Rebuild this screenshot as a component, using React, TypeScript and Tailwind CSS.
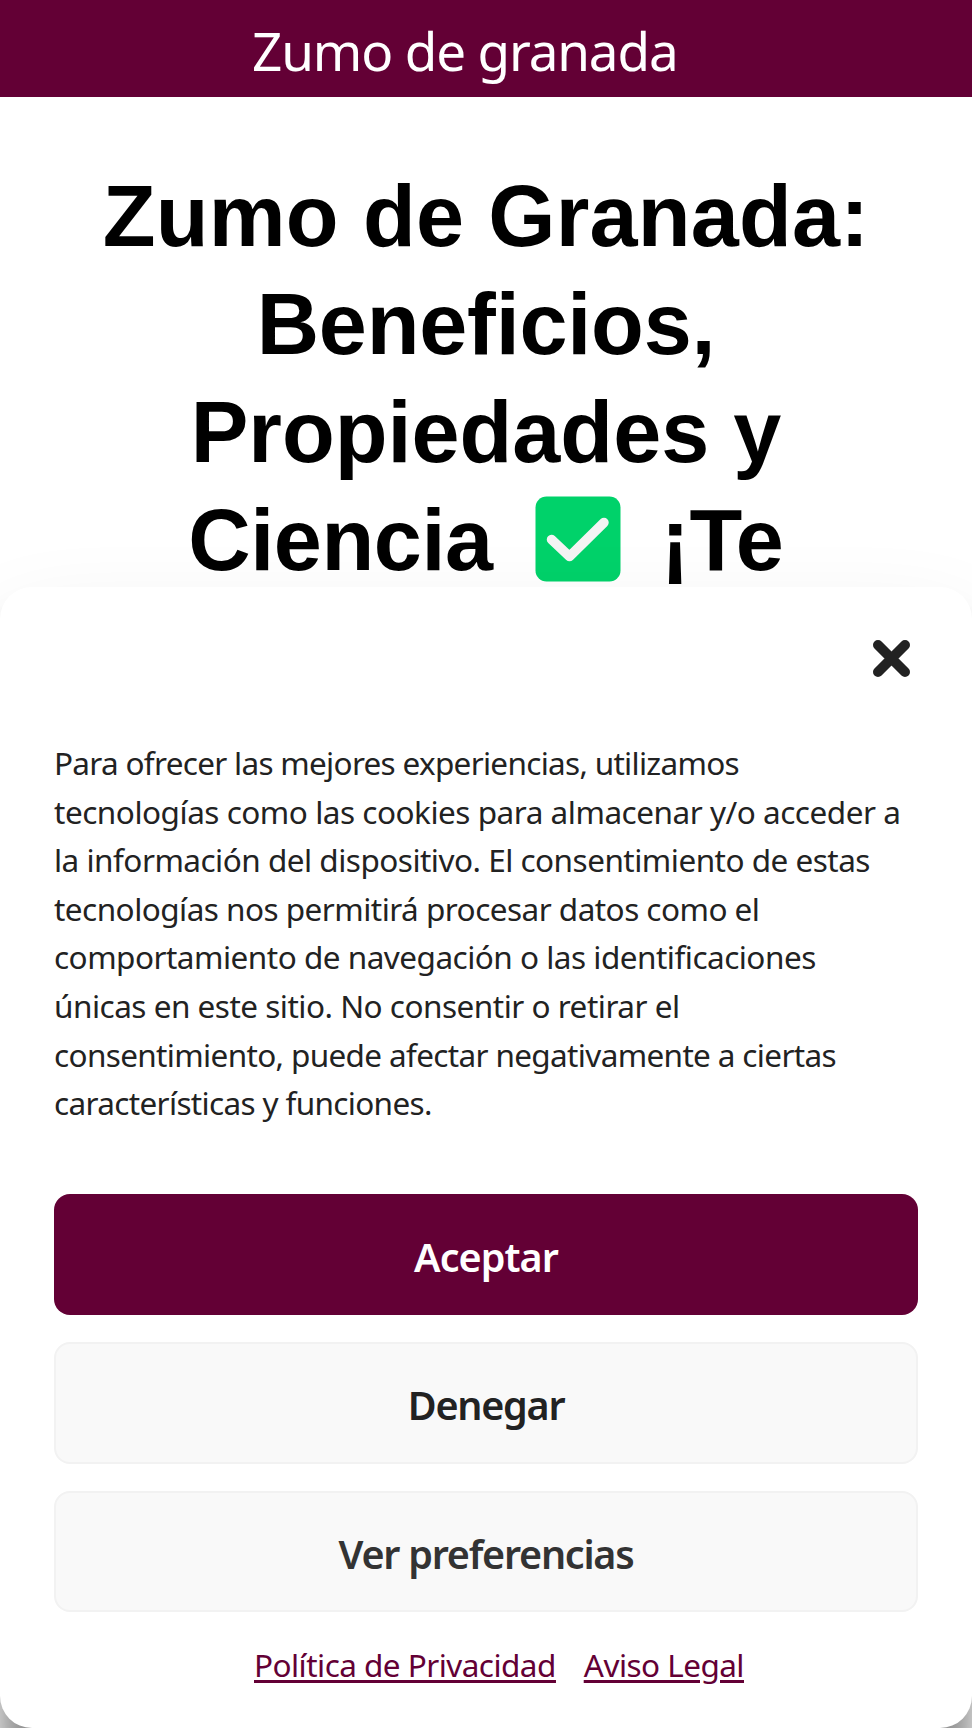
import React from 'react';

interface TextLine {
  text: string;
  className: string;
}

const TITLE_LINES: TextLine[] = [
  { text: 'Zumo de Granada:', className: 'tracking-[0.2px]' },
  { text: 'Beneficios,', className: 'tracking-[-0.2px]' },
  { text: 'Propiedades y', className: '' },
];

const NOTICE_LINES: TextLine[] = [
  { text: 'Para ofrecer las mejores experiencias, utilizamos', className: 'tracking-[-0.7px]' },
  { text: 'tecnologías como las cookies para almacenar y/o acceder a', className: 'tracking-[-0.48px]' },
  { text: 'la información del dispositivo. El consentimiento de estas', className: 'tracking-[-0.51px]' },
  { text: 'tecnologías nos permitirá procesar datos como el', className: 'tracking-[-0.53px]' },
  { text: 'comportamiento de navegación o las identificaciones', className: 'tracking-[-0.51px]' },
  { text: 'únicas en este sitio. No consentir o retirar el', className: 'tracking-[-0.5px]' },
  { text: 'consentimiento, puede afectar negativamente a ciertas', className: 'tracking-[-0.65px]' },
  { text: 'características y funciones.', className: 'tracking-[-0.65px]' },
];

function CheckEmoji() {
  return (
    <svg viewBox="0 0 86 86" className="inline-block h-[86px] w-[86px] align-[-12px]" aria-label="check">
      <rect x="0.5" y="0.5" width="85" height="85" rx="11" fill="#00d26a" />
      <path d="M16.5 43.5 L34.5 60.5 L69 26.5" fill="none" stroke="#f4f4f4" strokeWidth="9.5" strokeLinecap="round" strokeLinejoin="round" />
    </svg>
  );
}

function CookieBanner() {
  return (
    <div
      role="dialog"
      className="absolute inset-x-0 top-[587px] h-[1141px] rounded-[32px] bg-white px-[54px] text-[#222222] shadow-[0_51px_103px_rgba(0,0,0,0.12),0_40px_32px_rgba(0,0,0,0.4)]"
    >
      <div className="flex h-[152px] justify-end pt-[51px] pr-[6px]">
        <button aria-label="Cerrar" className="h-[41px] w-[41px]">
          <svg viewBox="0 0 41 41" className="h-[41px] w-[41px]">
            <path d="M7 7 L34 34 M34 7 L7 34" stroke="#222222" strokeWidth="10" strokeLinecap="round" />
          </svg>
        </button>
      </div>

      <div className="text-[31.5px] leading-[48.6px]">
        {NOTICE_LINES.map((line) => (
          <p key={line.text} className={`whitespace-nowrap ${line.className}`}>
            {line.text}
          </p>
        ))}
      </div>

      <div className="mt-[66px] flex flex-col gap-[27px] text-[39.5px] font-semibold tracking-[-1.25px]">
        <button className="h-[121.5px] rounded-[16px] bg-[#630035] pt-[6px] text-white">
          <span className="tracking-[-0.95px]">Aceptar</span>
        </button>
        <button className="h-[121.5px] rounded-[16px] border-[2.7px] border-[#f2f2f2] bg-[#f9f9f9] pt-[6px]">
          <span>Denegar</span>
        </button>
        <button className="h-[121.5px] rounded-[16px] border-[2.7px] border-[#f2f2f2] bg-[#f9f9f9] pt-[6px] text-[#333333]">
          <span>Ver preferencias</span>
        </button>
      </div>

      {/* Legal links */}
      <div className="mt-[28px] flex gap-[28px] pl-[200px] text-[31.5px] leading-[49px] tracking-[-0.54px] text-[#630035] underline decoration-[2.7px] underline-offset-[3px]">
        <a href="#privacidad">Política de Privacidad</a>
        <a href="#aviso">Aviso Legal</a>
      </div>
    </div>
  );
}

export default function App() {
  return (
    <div className="relative h-[1728px] w-[972px] overflow-hidden bg-white font-['Noto_Sans',sans-serif]">
      <header className="flex h-[97px] items-center bg-[#630035] pt-[5px] pl-[252px] text-[53px] text-white">
        <span className="whitespace-nowrap tracking-[-1.15px]">Zumo de granada</span>
      </header>

      <main className="pt-[65px]">
        <h1 className="text-center font-['Liberation_Sans',Arial,sans-serif] text-[86.4px] leading-[108px] font-bold text-black">
          {TITLE_LINES.map((line) => (
            <span key={line.text} className={`block whitespace-nowrap ${line.className}`}>
              {line.text}
            </span>
          ))}
          <span className="block whitespace-nowrap">
            <span className="tracking-[-0.4px]">Ciencia</span>{' '}
            <span className="pr-[16px] pl-[18px]"><CheckEmoji /></span> ¡Te
          </span>
        </h1>
      </main>

      <CookieBanner />
    </div>
  );
}
